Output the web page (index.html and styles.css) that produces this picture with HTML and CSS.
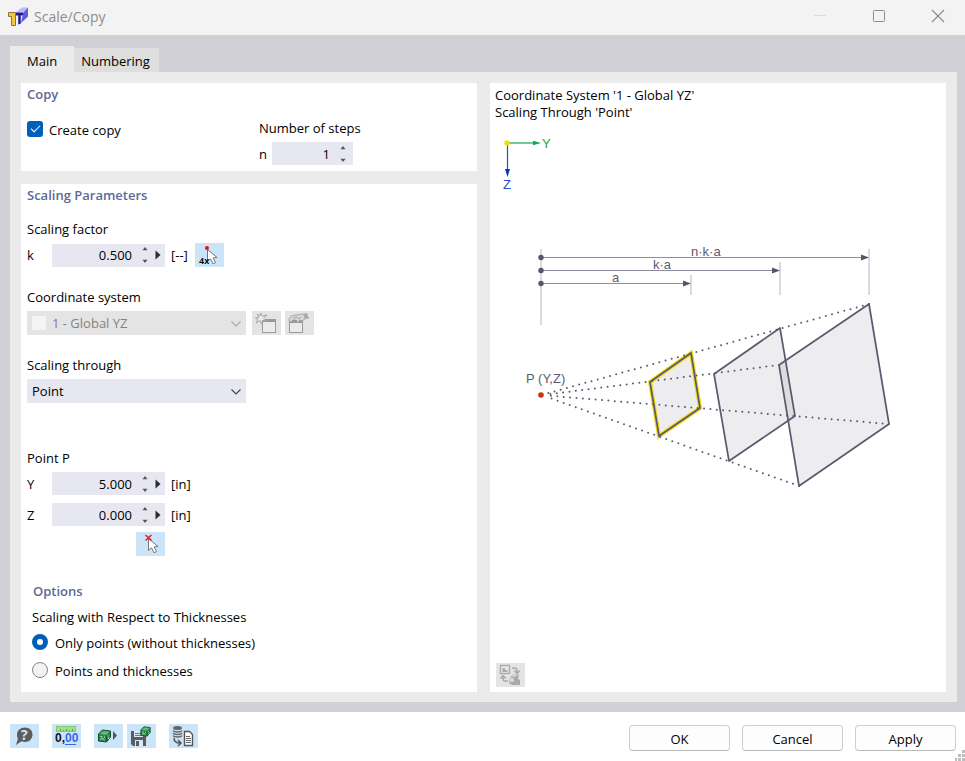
FILE: index.html
```html
<!DOCTYPE html>
<html lang="en">
<head>
<meta charset="utf-8">
<title>Scale/Copy</title>
<link rel="stylesheet" href="styles.css">
</head>
<body>
<svg class="defs" aria-hidden="true">
  <symbol id="cursor" viewBox="0 0 29 24">
    <path d="M12.500 6.500v12l3-2.700 2.500 5 2.500-1.200-2.400-4.700 3.900-.4z" fill="#fff" stroke="#777" stroke-linejoin="round"/>
  </symbol>
  <symbol id="up" viewBox="0 0 6 4"><path d="M3 0L5.500 3.200h-5z" fill="#555"/></symbol>
  <symbol id="down" viewBox="0 0 6 4"><path d="M3 4L5.500.8h-5z" fill="#555"/></symbol>
  <symbol id="play" viewBox="0 0 6 10"><path d="M.5.500v9l5-4.500z" fill="#2c2c2c"/></symbol>
  <symbol id="chevron" viewBox="0 0 12 8"><path d="M1.500 1.500L6 6l4.500-4.500" fill="none" stroke="currentColor" stroke-width="1.200"/></symbol>
  <symbol id="cube" viewBox="0 0 14 14">
    <path d="M1 5l4-4 8 1v6l-4 5-8-1z" fill="#1c8a4a" stroke="#164b2c"/>
    <path d="M2 5l3.500-3L12 2.500 9 6z" fill="#64b67f"/>
    <path d="M9 6v6" stroke="#164b2c"/>
    <path d="M3 7.500l2 .5M6.500 8l1 .2M3 10.500c1-1 3-1 4 .5M10.500 6.500v1M10.500 10l1-1.500" stroke="#d9f4df" fill="none"/>
  </symbol>
</svg>

<header class="titlebar">
  <svg class="app-icon" width="20" height="20" viewBox="0 0 20 20" aria-hidden="true">
    <path d="M8 5l6-4.500h6L15 6z" fill="#b9b9fb"/>
    <path d="M15 6l5-5.500v9L13 16z" fill="#5c5ce0"/>
    <path d="M8 5h7v4h-2v7l-3 2V9H8z" fill="#7c7cf0"/>
    <path d="M8 7h7M11.500 7v10" stroke="#20207c" stroke-width="2"/>
    <path d="M.5 5.500h7v13h-4v-9h-3z" fill="#f5c83b" stroke="#8a7440"/>
  </svg>
  <h1 class="title">Scale/Copy</h1>
  <div class="window-buttons">
    <button class="window-button" aria-label="Minimize"><svg width="14" height="14" viewBox="0 0 14 14"><path d="M1 6.500h12" stroke="#dcdcdc"/></svg></button>
    <button class="window-button" aria-label="Maximize"><svg width="14" height="14" viewBox="0 0 14 14"><rect x="1.500" y="1.500" width="11" height="11" rx="1" fill="none" stroke="#8d8d8d"/></svg></button>
    <button class="window-button" aria-label="Close"><svg width="14" height="14" viewBox="0 0 14 14"><path d="M1 1l12 12M13 1L1 13" stroke="#8d8d8d" stroke-width="1.200"/></svg></button>
  </div>
</header>

<main class="workspace">
  <nav class="tabs">
    <button class="tab tab-active">Main</button>
    <button class="tab">Numbering</button>
  </nav>
  <div class="page">
    <div class="column">
      <section class="panel">
        <h2 class="heading">Copy</h2>
        <div class="copy-grid">
          <label class="choice"><input class="check" type="checkbox" checked><span>Create copy</span></label>
          <div>
            <div class="label">Number of steps</div>
            <div class="row">
              <label class="symbol symbol-short" for="steps">n</label>
              <div class="number number-short">
                <input class="number-input" id="steps" type="text" value="1">
                <span class="spin"><button class="step" aria-label="Increase"><svg width="6" height="4"><use href="#up"/></svg></button><button class="step" aria-label="Decrease"><svg width="6" height="4"><use href="#down"/></svg></button></span>
              </div>
            </div>
          </div>
        </div>
      </section>

      <section class="panel panel-fill">
        <h2 class="heading">Scaling Parameters</h2>
        <div class="group">
          <div class="label">Scaling factor</div>
          <div class="row">
            <label class="symbol" for="factor">k</label>
            <div class="number">
              <input class="number-input" id="factor" type="text" value="0.500">
              <span class="spin"><button class="step" aria-label="Increase"><svg width="6" height="4"><use href="#up"/></svg></button><button class="step" aria-label="Decrease"><svg width="6" height="4"><use href="#down"/></svg></button></span>
              <button class="more" aria-label="More"><svg width="6" height="10"><use href="#play"/></svg></button>
            </div>
            <span class="unit">[--]</span>
            <button class="tool" aria-label="Pick four points"><svg width="29" height="24" viewBox="0 0 29 24"><use href="#cursor"/><circle cx="12" cy="5" r="2" fill="#e00f1c"/><text class="mini-text" x="4" y="21">4x</text></svg></button>
          </div>
        </div>
        <div class="group">
          <label class="label" for="system">Coordinate system</label>
          <div class="row">
            <div class="drop drop-disabled">
              <select class="select" id="system" disabled><option>1 - Global YZ</option></select>
              <span class="swatch"></span>
              <svg class="chevron" width="12" height="8"><use href="#chevron"/></svg>
            </div>
            <button class="tool tool-grey tool-first" disabled aria-label="New"><svg width="29" height="24" viewBox="0 0 29 24">
              <rect x="10.500" y="8.500" width="13" height="13" fill="#ececec" stroke="#999"/><path d="M10 9.500h14" stroke="#999" stroke-width="3"/>
              <path d="M9 2l1.200 3.300L15 4l-3.500 3 3 3-4-.8L9.500 13 8 9.500 4 12l2-3.500L3.500 7l3.500-.500L5 3l3 2z" fill="#ededed" stroke="#999" stroke-width=".8"/></svg></button>
            <button class="tool tool-grey" disabled aria-label="Edit"><svg width="29" height="24" viewBox="0 0 29 24">
              <rect x="4.500" y="9.500" width="13" height="12" fill="#ececec" stroke="#999"/><path d="M4 10.500h14" stroke="#999" stroke-width="3"/>
              <path d="M4 8c1-3 4-4 7-4l6-1 3 1v4l-3 2-2-1-2 3-2-3-3 0-2 2-2-1z" fill="#d6d6d6" stroke="#999" stroke-width=".8"/><path d="M8 7l4-1 2 2 2-2" fill="none" stroke="#aaa"/><path d="M18 3l4-1 2 6-4-.5z" fill="#aaa"/></svg></button>
          </div>
        </div>
        <div class="group">
          <label class="label" for="through">Scaling through</label>
          <div class="drop">
            <select class="select" id="through"><option>Point</option></select>
            <svg class="chevron" width="12" height="8"><use href="#chevron"/></svg>
          </div>
        </div>
        <div class="group group-point">
          <div class="label">Point P</div>
          <div class="row row-coordinate">
            <label class="symbol" for="py">Y</label>
            <div class="number">
              <input class="number-input" id="py" type="text" value="5.000">
              <span class="spin"><button class="step" aria-label="Increase"><svg width="6" height="4"><use href="#up"/></svg></button><button class="step" aria-label="Decrease"><svg width="6" height="4"><use href="#down"/></svg></button></span>
              <button class="more" aria-label="More"><svg width="6" height="10"><use href="#play"/></svg></button>
            </div>
            <span class="unit">[in]</span>
          </div>
          <div class="row">
            <label class="symbol" for="pz">Z</label>
            <div class="number">
              <input class="number-input" id="pz" type="text" value="0.000">
              <span class="spin"><button class="step" aria-label="Increase"><svg width="6" height="4"><use href="#up"/></svg></button><button class="step" aria-label="Decrease"><svg width="6" height="4"><use href="#down"/></svg></button></span>
              <button class="more" aria-label="More"><svg width="6" height="10"><use href="#play"/></svg></button>
            </div>
            <span class="unit">[in]</span>
          </div>
          <button class="tool tool-pick" aria-label="Pick point"><svg width="29" height="24" viewBox="0 0 29 24"><use href="#cursor"/><path d="M9.500 3l6 5.500M15.500 3l-6 5.500" stroke="#e0202c" stroke-width="1.500"/></svg></button>
        </div>
        <div class="options">
          <h2 class="heading heading-options">Options</h2>
          <div class="label">Scaling with Respect to Thicknesses</div>
          <label class="choice choice-radio"><input class="radio" type="radio" name="thickness" checked><span>Only points (without thicknesses)</span></label>
          <label class="choice choice-radio"><input class="radio" type="radio" name="thickness"><span>Points and thicknesses</span></label>
        </div>
      </section>
    </div>

    <section class="panel preview">
      <p class="caption">Coordinate System '1 - Global YZ'<br>Scaling Through 'Point'</p>
      <svg class="drawing" viewBox="490 121 456 380" role="img" aria-label="Scaling diagram">
        <path d="M507.500 143v26" stroke="#1f4fc4" stroke-width="1.200"/>
        <path d="M505 169h5l-2.500 8z" fill="#0a35c0"/>
        <path d="M507 143h27" stroke="#14a750" stroke-width="1.200"/>
        <path d="M533 140.800v4.400l8-2.200z" fill="#14a750"/>
        <circle cx="507" cy="143" r="2.700" fill="#f7dc00"/>
        <text class="axis axis-y" x="542" y="148">Y</text>
        <text class="axis axis-z" x="503" y="189">Z</text>

        <path class="extension" d="M541 249v76M691 275v20M780 262v33M869 249v46"/>
        <path class="dimension" d="M541 257.500h322M541 270.500h233M541 283.500h144"/>
        <path class="mark" d="M861 254.500l8 3-8 3zM772 267.500l8 3-8 3zM683 280.500l8 3-8 3z"/>
        <circle class="mark" cx="541" cy="257.500" r="2.700"/>
        <circle class="mark" cx="541" cy="270.500" r="2.700"/>
        <circle class="mark" cx="541" cy="283.500" r="2.700"/>
        <text class="note" x="691" y="256">n·k·a</text>
        <text class="note" x="653" y="269">k·a</text>
        <text class="note" x="612" y="282">a</text>
        <text class="note" x="526" y="383">P (Y,Z)</text>

        <path class="face" d="M650 382l41-29 9 55-41 28z"/>
        <path class="face" d="M714 374l66-46 15 88-66 45z"/>
        <path class="face" d="M779 365l90-61 20 120-90 62z"/>
        <path class="halo" d="M650 382l41-29 9 55-41 28z"/>
        <path class="edge" d="M650 382l41-29 9 55-41 28z"/>
        <path class="edge" d="M714 374l66-46 15 88-66 45z"/>
        <path class="edge" d="M779 365l90-61 20 120-90 62z"/>
        <path class="ray" d="M869 304L547 393.500M779 365L547 394.500M889 424L547 395.500M799 486L547 397"/>
        <circle cx="541" cy="395" r="2.800" fill="#c8340f"/>
      </svg>
      <button class="tool tool-grey tool-preview" disabled aria-label="Switch picture"><svg width="29" height="24" viewBox="0 0 29 24">
        <rect x="4.500" y="2.500" width="9" height="8" fill="#e8e8e8" stroke="#aaa" stroke-width="1.400"/><path d="M6.500 9V5h2.500v2h2.500v2z" fill="#aaa"/>
        <path d="M16 5h3q2 0 2 3v1M18 7.500l3 3 3-3M12 18H9q-2 0-2-3v-1M4.500 15.500l2.500-3 3 3" fill="none" stroke="#aaa" stroke-width="1.500"/>
        <path d="M14 14l3-2.500h6l-1 4.500 2 1v5h-8l-3-2z" fill="#a9a9a9"/><path d="M14 14v5h4v-3.500zM15 13.500l3-2h4l-3 2.500z" fill="#d4d4d4"/></svg></button>
    </section>
  </div>
</main>

<footer class="footer">
  <div class="tools">
    <button class="tool" aria-label="Help"><svg width="29" height="24" viewBox="0 0 29 24"><path d="M15 3.500c4.500 0 7.500 3 7.500 7s-3 7.500-7.500 7.500q-2 0-3.500-.8L6 21l1.900-6.200Q7 13 7 10.500c0-4 3.500-7 8-7z" fill="#5c5c5c"/><text class="help-text" x="11" y="16">?</text></svg></button>
    <button class="tool" aria-label="Units and decimal places"><svg width="29" height="24" viewBox="0 0 29 24"><rect x="4.500" y="2.500" width="19" height="5" fill="#9ee28c" stroke="#7fca6e"/><path d="M8.500 5v2M11.500 6v1M14.500 5v2M17.500 6v1M20.500 5v2" stroke="#5f9d52"/><text class="digits" x="3" y="18">0,<tspan fill="#3568e8">00</tspan></text><path d="M13 20.500h11" stroke="#3568e8"/></svg></button>
    <div class="tool-pair">
      <button class="tool" aria-label="Load defaults"><svg width="29" height="24" viewBox="0 0 29 24"><use href="#cube" x="3" y="5" width="15" height="14"/><path d="M19 7v9l4-4.500z" fill="#555"/></svg></button>
      <button class="tool" aria-label="Save defaults"><svg width="29" height="24" viewBox="0 0 29 24"><path d="M4 7h12l3 3v12H6l-2-2z" fill="#5c5c5c"/><rect x="7" y="7" width="9" height="6" fill="#d8eaf8"/><path d="M8 9.500h6M8 11.500h6" stroke="#777"/><path d="M8 16h8v6H8z" fill="#d8eaf8"/><path d="M9 17h3v5H9z" fill="#5c5c5c"/><use href="#cube" x="13" y="2" width="11" height="11"/></svg></button>
    </div>
    <button class="tool" aria-label="Copy from database"><svg width="29" height="24" viewBox="0 0 29 24"><ellipse cx="8.500" cy="4" rx="4.500" ry="2" fill="#666"/><path d="M4 6.500c1 2 8 2 9 0M4 9c1 2 8 2 9 0M4 11.500c1 2 8 2 9 0" fill="none" stroke="#666" stroke-width="1.400"/><path d="M5 14q0 5 6 5M9 16l3 3-3 3" fill="none" stroke="#555" stroke-width="1.500"/><path d="M15.500 7.500h5l3 3v11h-8z" fill="#fff" stroke="#555" stroke-width="1.400"/><path d="M17 12.500h4M17 14.500h5M17 16.500h5M17 18.500h5" stroke="#666"/></svg></button>
  </div>
  <div class="actions">
    <button class="action">OK</button>
    <button class="action">Cancel</button>
    <button class="action">Apply</button>
  </div>
  <svg class="grip" width="10" height="11" viewBox="0 0 10 11" aria-hidden="true"><path d="M7 0h3v3H7zM3 4h3v3H3zM7 4h3v3H7zM0 8h2v3H0zM3 8h3v3H3zM7 8h3v3H7z" fill="#bdbdbd"/></svg>
</footer>
</body>
</html>
```
FILE: styles.css
```css
* { box-sizing: border-box; }

body {
  margin: 0;
  min-height: 100vh;
  display: flex;
  flex-direction: column;
  background: #fff;
  color: #000;
  font: 13px/20px "Open Sans", "Noto Sans", sans-serif;
}

button, input, select {
  font: inherit;
  color: inherit;
  margin: 0;
  padding: 0;
  border: 0;
  background: none;
}

svg { display: block; }
.defs { position: absolute; width: 0; height: 0; }

.titlebar {
  display: flex;
  align-items: center;
  height: 35px;
  padding-left: 8px;
  background: #f3f3f3;
}
.app-icon { margin-top: -2px; }
.title {
  margin: 0 0 2px 6px;
  color: #8d8d8d;
  font-size: 14px;
  font-weight: 400;
}
.window-buttons { display: flex; gap: 5px; margin: 0 0 3px auto; }
.window-button { display: grid; place-items: center; width: 54px; height: 32px; }

.workspace {
  flex: 1;
  display: flex;
  flex-direction: column;
  padding: 11px 8px 10px 10px;
  background: #d1d0d6;
}
.tabs { display: flex; align-items: flex-end; height: 26px; }
.tab { height: 24px; padding: 2px 9px 0 7px; background: #dedede; }
.tab-active { height: 26px; padding: 4px 17px 0; background: #ebebeb; }
.page {
  flex: 1;
  display: grid;
  grid-template-columns: 1fr 1fr;
  gap: 13px;
  padding: 11px 11px 10px;
  background: #ebebeb;
}
.column { display: flex; flex-direction: column; gap: 13px; }
.panel { padding: 0 6px 6px; background: #fff; }
.panel-fill { flex: 1; }
.heading {
  margin: 0 0 13px;
  color: #5b6a96;
  font-size: 13px;
  line-height: 22px;
  font-weight: 600;
}
.copy-grid { display: grid; grid-template-columns: 232px 1fr; align-items: start; }
.label { display: block; margin-bottom: 4px; }
.row { display: flex; align-items: center; }
.symbol { width: 25px; }
.symbol-short { width: 13px; }

.number { display: flex; align-items: center; width: 113px; height: 23px; background: #e7e7f2; }
.number-short { width: 81px; }
.number-input { flex: 1; min-width: 0; height: 23px; text-align: right; outline: 0; }
.spin { display: flex; flex-direction: column; gap: 8px; width: 6px; margin: 0 7px 0 10px; }
.step { width: 6px; height: 4px; }
.more { width: 6px; height: 10px; margin-right: 4px; }
.unit { width: 24px; margin-left: 6px; }

.tool { display: block; width: 29px; height: 24px; background: #cce4f7; }
.tool-grey { background: #e4e4e4; margin-left: 4px; }
.tool-first { margin-left: 6px; }
.tool-pick { margin: 6px 0 0 109px; }

.group { margin-bottom: 20px; }
.group-point { margin: 45px 0 24px; }
.row-coordinate { margin-bottom: 8px; }
.group .row { min-height: 23px; }

.drop { position: relative; width: 219px; height: 24px; background: #e7e7f2; color: #444; }
.select {
  width: 100%;
  height: 24px;
  padding-left: 5px;
  appearance: none;
  color: #000;
}
.drop-disabled { background: #e4e4e4; color: #aaa; }
.drop-disabled .select { padding-left: 25px; color: #828282; opacity: 1; }
.swatch { position: absolute; left: 5px; top: 5px; width: 14px; height: 14px; background: #f4f4f4; }
.chevron { position: absolute; right: 4px; top: 9px; pointer-events: none; }

.choice { display: flex; align-items: center; gap: 6px; height: 24px; }
.check, .radio { appearance: none; width: 16px; height: 16px; flex: none; margin-bottom: 2px; }
.check { display: grid; place-items: center; border-radius: 3px; background: #005fb8; }
.check::before {
  content: "";
  width: 8px;
  height: 4px;
  margin-bottom: 3px;
  border: solid #fff;
  border-width: 0 0 1px 1px;
  transform: rotate(-45deg);
}
.radio { border: 1px solid #858585; border-radius: 50%; background: #f3f3f3; }
.radio:checked { border: 5px solid #005fb8; background: #fff; }
.options { padding-left: 5px; }
.options .label { margin-bottom: 2px; }
.heading-options { margin: 0 0 5px 1px; }
.choice-radio { height: 28px; gap: 7px; }

.preview { display: flex; flex-direction: column; padding: 4px 0 5px; }
.caption { margin: 0 5px; line-height: 17px; }
.drawing { width: 100%; }
.tool-preview { margin: auto 0 0 6px; }
.axis { font: 13px "Liberation Sans", sans-serif; }
.axis-y { fill: #14a750; }
.axis-z { fill: #1f4fc4; }
.note { font: 13px "Liberation Sans", sans-serif; fill: #5c5c70; }
.extension { stroke: #b5b5c0; fill: none; }
.dimension { stroke: #8c8c9d; fill: none; }
.mark { fill: #55556c; }
.face { fill: #5c5c70; fill-opacity: .11; }
.halo { fill: none; stroke: #f3da16; stroke-width: 4; }
.edge { fill: none; stroke: #5a5a6f; stroke-width: 1.700; stroke-linejoin: round; }
.ray { fill: none; stroke: #5a5a6f; stroke-width: 2; stroke-linecap: round; stroke-dasharray: 0 6.400; }

.footer {
  position: relative;
  display: flex;
  justify-content: space-between;
  align-items: flex-start;
  min-height: 49px;
  padding: 12px 9px 9px 10px;
}
.tools { display: flex; gap: 13px; }
.tool-pair { display: flex; gap: 4px; }
.actions { display: flex; gap: 12px; padding-top: 1px; }
.action {
  width: 101px;
  height: 26px;
  padding-top: 1px;
  border: 1px solid #cfcfcf;
  border-bottom-color: #b9b9b9;
  border-radius: 4px;
  background: #fdfdfd;
}
.grip { position: absolute; right: 0; bottom: 0; }
.mini-text { font: 600 9px "Noto Sans", sans-serif; }
.help-text { font: 700 14px "Noto Sans", sans-serif; fill: #cce4f7; }
.digits { font: 600 12px "Liberation Sans", sans-serif; fill: #111; }
```
